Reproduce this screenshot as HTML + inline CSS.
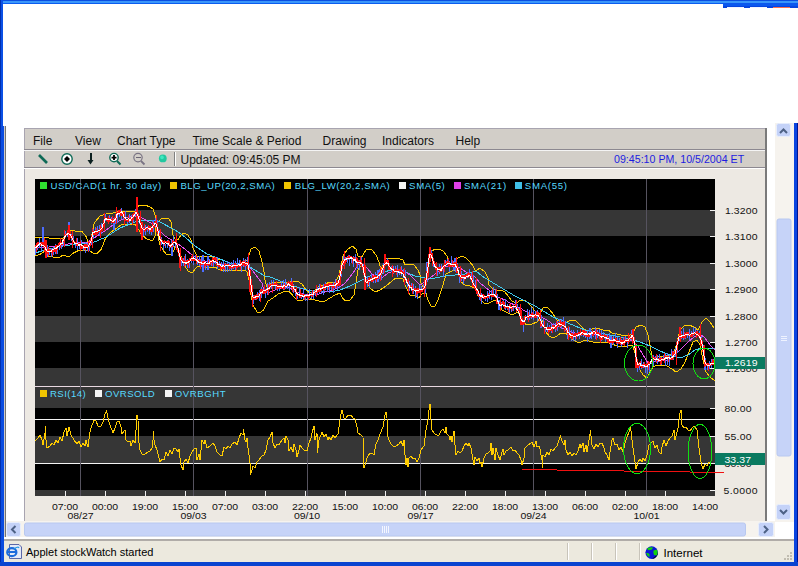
<!DOCTYPE html>
<html><head><meta charset="utf-8"><title>stockWatch</title>
<style>
html,body{margin:0;padding:0;width:798px;height:566px;overflow:hidden;background:#fff}
svg{display:block}
text{font-family:"Liberation Sans",sans-serif}
</style></head><body>
<svg width="798" height="566" viewBox="0 0 798 566" shape-rendering="crispEdges">
<defs>
<clipPath id="cc"><rect x="35" y="179" width="680" height="317"/></clipPath>
</defs>

<rect x="0" y="0" width="798" height="4" fill="#0A5CF0"/>
<rect x="0" y="0" width="798" height="1" fill="#0A4EE0"/>
<rect x="0" y="1" width="798" height="2" fill="#3A96FA"/>
<rect x="723" y="3" width="75" height="5" fill="#0A58EE"/>
<rect x="723" y="6" width="75" height="2" fill="#0646E0"/>
<rect x="727" y="7" width="17" height="1" fill="#F0F4FF"/><rect x="750" y="7" width="17" height="1" fill="#F0F4FF"/><rect x="773" y="7" width="17" height="1" fill="#F87050"/>
<rect x="0" y="0" width="3" height="566" fill="#0A50E6"/>
<rect x="0" y="126" width="4" height="440" fill="#0A4CE0"/>
<rect x="0" y="0" width="1" height="566" fill="#0030B0"/>
<rect x="4" y="126" width="1" height="414" fill="#D0CCC8"/><rect x="5" y="126" width="1" height="414" fill="#727272"/>
<rect x="794" y="123" width="4" height="443" fill="#0A44E0"/><rect x="797" y="123" width="1" height="443" fill="#001490"/>
<rect x="0" y="562" width="798" height="4" fill="#0A44D0"/>
<rect x="775" y="123" width="19" height="399" fill="#F6F3EE"/>
<rect x="776.5" y="123.5" width="14" height="13" rx="2" fill="#C4D2F8" stroke="#E8EEFC" stroke-width="1" shape-rendering="geometricPrecision"/>
<path d="M780 133L783.5 129.5L787 133" fill="none" stroke="#4D6185" stroke-width="2" shape-rendering="geometricPrecision"/>
<rect x="777" y="219" width="14" height="237" rx="2" fill="#C6D3F8" stroke="#B8C8F0" stroke-width="1" shape-rendering="geometricPrecision"/>
<path d="M781 336.5H787M781 338.5H787M781 340.5H787" stroke="#EEF2FF" stroke-width="1"/>
<rect x="776.5" y="504.5" width="14" height="15" rx="2" fill="#C4D2F8" stroke="#E8EEFC" stroke-width="1" shape-rendering="geometricPrecision"/>
<path d="M780 510L783.5 513.5L787 510" fill="none" stroke="#4D6185" stroke-width="2" shape-rendering="geometricPrecision"/>
<rect x="24" y="128" width="743" height="393" fill="#EDE9E3"/>
<rect x="24" y="128" width="741" height="21" fill="#D2CEC8"/>
<rect x="24" y="150" width="741" height="17" fill="#D2CEC8"/>
<rect x="24" y="128" width="741" height="1" fill="#A8A4B0"/>
<rect x="24" y="128" width="1" height="393" fill="#A8A4B0"/>
<rect x="24" y="149" width="741" height="1" fill="#8C8890"/>
<rect x="24" y="150" width="741" height="1" fill="#F4F4F4"/>
<rect x="24" y="167" width="741" height="1" fill="#8C8890"/>
<rect x="24" y="168" width="741" height="1" fill="#FFFFFF"/>
<rect x="765" y="128" width="2" height="393" fill="#7A7A7A"/>
<text x="33" y="144.5" font-size="12" fill="#111">File</text>
<text x="75" y="144.5" font-size="12" fill="#111">View</text>
<text x="117" y="144.5" font-size="12" fill="#111">Chart Type</text>
<text x="192.5" y="144.5" font-size="12" fill="#111">Time Scale &amp; Period</text>
<text x="322.5" y="144.5" font-size="12" fill="#111">Drawing</text>
<text x="382" y="144.5" font-size="12" fill="#111">Indicators</text>
<text x="455.5" y="144.5" font-size="12" fill="#111">Help</text>
<path d="M39 155L47 163" stroke="#0E6A56" stroke-width="2.6" shape-rendering="geometricPrecision"/>
<circle cx="67" cy="159" r="5.2" fill="#fff" stroke="#0E6A56" stroke-width="1.4" shape-rendering="geometricPrecision"/><path d="M67 156L70 159L67 162L64 159Z" fill="#000" shape-rendering="geometricPrecision"/>
<path d="M90.5 153V161" stroke="#0C2020" stroke-width="2"/><path d="M87.5 160L90.5 164.5L93.5 160Z" fill="#0C2020" shape-rendering="geometricPrecision"/>
<circle cx="114" cy="157.6" r="4.2" fill="#fff" stroke="#0E6A56" stroke-width="1.4" shape-rendering="geometricPrecision"/><path d="M111.5 157.6H116.5M114 155.1V160.1" stroke="#000" stroke-width="1.8" shape-rendering="geometricPrecision"/><path d="M117 161L120.5 164.5" stroke="#0E6A56" stroke-width="2" shape-rendering="geometricPrecision"/>
<circle cx="138" cy="157.6" r="4.2" fill="none" stroke="#7A7484" stroke-width="1.2" shape-rendering="geometricPrecision"/><path d="M135.5 157.6H140.5" stroke="#6A6474" stroke-width="1.4"/><path d="M141 161L144.5 164.5" stroke="#7A7484" stroke-width="1.8" shape-rendering="geometricPrecision"/>
<circle cx="162.8" cy="158.4" r="3.9" fill="#22C8A0" shape-rendering="geometricPrecision"/><circle cx="162" cy="157.4" r="1.8" fill="#40E8C0" shape-rendering="geometricPrecision"/>
<rect x="174" y="152" width="1" height="14" fill="#808080"/><rect x="175" y="152" width="1" height="14" fill="#FFFFFF"/>
<text x="180.5" y="163.8" font-size="12" fill="#111">Updated: 09:45:05 PM</text>
<text x="614" y="163.2" font-size="10.65" fill="#1C1CE0">09:45:10 PM, 10/5/2004 ET</text>
<rect x="35" y="179" width="680" height="317" fill="#000"/>
<rect x="35" y="210" width="680" height="26" fill="#363636"/>
<rect x="35" y="263" width="680" height="26" fill="#363636"/>
<rect x="35" y="316" width="680" height="26" fill="#363636"/>
<rect x="35" y="368" width="680" height="18" fill="#363636"/>
<rect x="35" y="387" width="680" height="21" fill="#363636"/>
<rect x="35" y="436" width="680" height="27" fill="#363636"/>
<rect x="35" y="490" width="680" height="6" fill="#363636"/>
<rect x="35" y="386" width="680" height="1" fill="#E8D8E0"/>
<rect x="35" y="419" width="680" height="1" fill="#F4F4F4"/>
<rect x="35" y="463" width="680" height="1" fill="#F4F4F4"/>
<rect x="80" y="179" width="1" height="317" fill="#56535F"/>
<rect x="193" y="179" width="1" height="317" fill="#56535F"/>
<rect x="307" y="179" width="1" height="317" fill="#56535F"/>
<rect x="420" y="179" width="1" height="317" fill="#56535F"/>
<rect x="533" y="179" width="1" height="317" fill="#56535F"/>
<rect x="646" y="179" width="1" height="317" fill="#56535F"/>
<rect x="710" y="210" width="5" height="1" fill="#F0F0F0"/>
<rect x="710" y="236" width="5" height="1" fill="#F0F0F0"/>
<rect x="710" y="263" width="5" height="1" fill="#F0F0F0"/>
<rect x="710" y="289" width="5" height="1" fill="#F0F0F0"/>
<rect x="710" y="316" width="5" height="1" fill="#F0F0F0"/>
<rect x="710" y="342" width="5" height="1" fill="#F0F0F0"/>
<rect x="710" y="368" width="5" height="1" fill="#F0F0F0"/>
<rect x="710" y="408" width="5" height="1" fill="#F0F0F0"/>
<rect x="710" y="436" width="5" height="1" fill="#F0F0F0"/>
<rect x="710" y="463" width="5" height="1" fill="#F0F0F0"/>
<rect x="710" y="490" width="5" height="1" fill="#F0F0F0"/>
<rect x="65" y="491" width="1" height="5" fill="#F0F0F0"/>
<rect x="105" y="491" width="1" height="5" fill="#F0F0F0"/>
<rect x="145" y="491" width="1" height="5" fill="#F0F0F0"/>
<rect x="185" y="491" width="1" height="5" fill="#F0F0F0"/>
<rect x="225" y="491" width="1" height="5" fill="#F0F0F0"/>
<rect x="265" y="491" width="1" height="5" fill="#F0F0F0"/>
<rect x="305" y="491" width="1" height="5" fill="#F0F0F0"/>
<rect x="345" y="491" width="1" height="5" fill="#F0F0F0"/>
<rect x="385" y="491" width="1" height="5" fill="#F0F0F0"/>
<rect x="425" y="491" width="1" height="5" fill="#F0F0F0"/>
<rect x="465" y="491" width="1" height="5" fill="#F0F0F0"/>
<rect x="505" y="491" width="1" height="5" fill="#F0F0F0"/>
<rect x="545" y="491" width="1" height="5" fill="#F0F0F0"/>
<rect x="585" y="491" width="1" height="5" fill="#F0F0F0"/>
<rect x="625" y="491" width="1" height="5" fill="#F0F0F0"/>
<rect x="665" y="491" width="1" height="5" fill="#F0F0F0"/>
<g clip-path="url(#cc)" shape-rendering="crispEdges" fill="none" stroke-linejoin="round">
<polyline points="35.0,238.0 41.0,237.0 46.0,237.0 49.0,238.0 62.0,239.0 64.7,236.0 69.0,230.0 74.5,231.0 81.6,231.0 85.8,236.0 88.7,244.0 90.8,240.0 94.3,223.0 100.0,216.0 105.6,214.0 112.7,213.0 119.7,211.0 126.8,212.0 130.0,211.0 135.0,212.0 137.0,207.0 140.0,205.0 145.0,205.0 150.0,207.0 153.0,209.0 155.0,215.0 156.0,222.0 158.0,222.0 161.0,219.0 165.0,218.0 169.0,219.0 171.0,222.0 172.0,228.0 173.0,235.0 175.0,239.0 178.0,240.0 181.0,235.0 184.0,233.0 188.0,235.0 191.0,240.0 193.0,248.0 195.0,252.0 197.0,256.0 202.0,256.0 210.0,256.0 215.0,258.0 222.0,260.0 228.0,262.0 232.0,264.0 240.0,265.0 247.0,260.0 251.0,249.0 255.0,247.0 259.0,251.0 262.0,262.0 264.0,272.0 265.0,280.0 267.0,287.0 270.0,285.0 272.0,282.0 283.0,282.0 290.0,282.0 297.0,281.0 302.0,284.0 306.0,290.0 310.0,293.0 314.0,291.0 318.0,287.0 325.0,284.0 330.0,282.0 335.0,283.0 339.0,275.0 343.0,256.0 347.0,250.0 352.0,246.0 356.0,249.0 358.0,256.0 362.0,257.0 364.0,253.0 367.0,249.0 372.0,250.0 376.0,255.0 379.0,262.0 381.0,270.0 386.0,258.0 392.0,258.0 400.0,259.0 403.0,260.0 405.0,265.0 410.0,264.0 414.0,265.0 418.0,270.0 420.0,275.0 421.0,283.0 423.0,287.0 426.0,285.0 428.0,270.0 431.0,252.0 435.0,249.0 439.0,249.0 443.0,251.0 447.0,256.0 449.0,263.0 453.0,263.0 458.0,258.0 462.0,256.0 466.0,258.0 470.0,262.0 473.0,266.0 475.0,270.0 477.0,270.0 480.0,268.0 485.0,272.0 488.0,278.0 489.0,285.0 492.0,288.0 497.0,291.0 501.0,290.0 505.0,292.0 508.0,296.0 512.0,301.0 516.0,303.0 521.0,300.0 525.0,300.0 529.0,304.0 533.0,308.0 536.0,313.0 540.0,314.0 543.0,308.0 547.0,307.0 550.0,310.0 553.0,314.0 557.0,320.0 562.0,322.0 567.0,322.0 571.0,320.0 576.0,321.0 580.0,325.0 584.0,329.0 588.0,331.0 592.0,329.0 597.0,328.0 603.0,330.0 608.0,330.0 612.0,333.0 617.0,334.0 621.0,335.0 625.0,336.0 630.0,335.0 633.0,333.0 636.0,327.0 641.0,325.0 645.0,327.0 648.0,335.0 650.0,345.0 652.0,357.0 655.0,359.0 660.0,356.0 665.0,356.0 670.0,355.0 674.0,352.0 677.0,343.0 680.0,330.0 684.0,326.0 689.0,325.0 694.0,327.0 698.0,330.0 702.0,322.0 706.0,318.0 710.0,322.0 714.0,328.0" stroke="#FFCC00" stroke-width="1"/>
<polyline points="35.0,256.0 40.6,254.0 45.0,251.0 47.7,256.0 53.0,257.0 60.0,257.0 63.0,255.0 69.0,257.0 71.7,254.0 77.4,251.0 83.0,250.0 88.7,250.0 93.0,253.0 96.4,254.0 101.4,249.0 105.6,238.0 111.0,232.0 117.0,228.0 121.0,225.0 127.0,224.0 130.0,224.0 135.0,224.0 137.0,227.0 140.0,232.0 143.0,236.0 147.0,239.0 150.0,240.0 153.0,240.0 155.0,236.0 156.0,226.0 158.0,236.0 160.0,245.0 163.0,250.0 166.0,254.0 169.0,255.0 172.0,254.0 174.0,250.0 176.0,243.0 178.0,248.0 181.0,256.0 185.0,266.0 188.0,271.0 192.0,273.0 196.0,268.0 198.0,266.0 205.0,267.0 215.0,267.0 218.0,269.0 225.0,271.0 232.0,270.0 245.0,270.0 247.0,272.0 249.0,280.0 250.0,290.0 253.0,305.0 257.0,312.0 260.0,313.0 263.5,310.0 268.0,301.0 273.0,298.0 278.0,294.0 286.0,291.0 289.5,292.0 297.0,300.0 303.0,300.0 310.5,299.0 319.0,301.0 325.0,301.0 330.0,298.0 335.0,295.0 340.0,293.0 342.0,297.0 345.0,301.0 350.0,300.0 354.0,295.0 356.0,283.0 358.0,270.0 360.0,266.0 362.0,266.0 366.0,280.0 370.0,288.0 375.0,292.0 380.0,290.0 386.0,286.0 392.0,281.0 396.0,278.0 400.0,278.0 403.0,279.0 405.0,285.0 410.0,295.0 415.0,296.0 419.0,298.0 422.0,294.0 426.0,293.0 428.0,300.0 431.0,306.0 435.0,306.0 438.0,300.0 443.0,285.0 446.0,274.0 450.0,272.0 454.0,270.0 458.0,273.0 461.0,282.0 465.0,285.0 470.0,286.0 475.0,288.0 477.0,294.0 481.0,300.0 485.0,304.0 489.0,303.0 493.0,301.0 496.0,300.0 498.0,304.0 502.0,310.0 506.0,312.0 510.0,314.0 514.0,314.0 518.0,312.0 521.0,316.0 523.0,322.0 527.0,325.0 532.0,324.0 537.0,322.0 540.0,318.0 543.0,322.0 546.0,332.0 549.0,336.0 553.0,338.0 557.0,336.0 561.0,333.0 565.0,333.0 569.0,336.0 573.0,340.0 577.0,342.0 581.0,342.0 585.0,340.0 589.0,341.0 593.0,342.0 598.0,342.0 603.0,342.0 607.0,342.0 612.0,344.0 617.0,346.0 621.0,346.0 625.0,347.0 630.0,345.0 633.0,346.0 637.0,360.0 640.0,370.0 643.0,375.0 647.0,378.0 650.0,372.0 653.0,367.0 657.0,365.0 662.0,365.0 667.0,366.0 672.0,369.0 676.0,372.0 681.0,369.0 685.0,362.0 689.0,352.0 693.0,342.0 697.0,340.0 700.0,345.0 703.0,360.0 706.0,372.0 710.0,377.0 715.0,381.0" stroke="#FFCC00" stroke-width="1"/>
<polyline points="35.0,253.0 49.0,249.0 63.0,246.0 77.0,244.0 92.0,243.0 106.0,237.0 120.0,228.0 135.0,222.0 144.0,220.5 157.0,220.5 165.0,224.7 178.0,231.8 185.0,237.0 195.0,246.0 207.0,254.0 220.0,259.0 230.0,263.0 240.0,264.0 250.0,267.0 258.0,272.0 265.0,276.0 270.0,277.0 283.0,282.0 297.0,287.0 307.0,290.0 320.0,291.0 330.0,292.0 340.0,290.0 350.0,286.0 360.0,281.0 370.0,276.0 380.0,274.0 390.0,270.0 400.0,270.0 405.0,272.0 415.0,276.0 425.0,278.0 435.0,278.0 445.0,276.0 455.0,275.0 465.0,274.0 475.0,271.0 477.0,272.0 485.0,278.0 495.0,284.0 505.0,290.0 515.0,296.0 525.0,301.0 535.0,306.0 545.0,312.0 553.0,317.0 563.0,321.0 575.0,326.0 585.0,330.0 595.0,332.0 605.0,334.0 615.0,336.0 625.0,338.0 633.0,340.0 640.0,342.0 650.0,346.0 660.0,351.0 670.0,355.0 680.0,358.0 688.0,355.0 695.0,350.0 702.0,348.0 710.0,348.0 715.0,349.0" stroke="#40CCF0" stroke-width="1"/>
<polyline points="35.0,247.0 49.0,247.0 63.0,245.0 77.0,242.0 88.0,242.0 94.0,238.0 106.0,230.0 117.0,222.0 125.0,218.0 135.0,216.0 138.5,216.0 152.6,224.0 165.0,236.0 176.7,243.0 185.0,249.0 193.0,256.0 200.0,260.0 210.0,262.0 220.0,264.0 230.0,265.0 240.0,265.0 247.0,265.0 252.0,270.0 262.0,283.0 263.5,289.0 268.5,292.5 278.0,289.0 288.0,287.0 297.0,292.0 307.0,295.0 319.0,294.0 325.0,292.0 330.0,291.0 340.0,287.0 345.0,283.0 350.0,277.0 355.0,270.0 358.0,265.0 362.0,263.0 367.0,268.0 372.0,274.0 378.0,278.0 383.0,277.0 388.0,273.0 394.0,271.0 400.0,271.0 403.0,270.0 410.0,275.0 415.0,280.0 420.0,285.0 425.0,282.0 430.0,278.0 435.0,274.0 440.0,270.0 445.0,266.0 455.0,266.0 460.0,268.0 466.0,272.0 475.0,277.0 480.0,283.0 485.0,287.0 490.0,291.0 495.0,295.0 500.0,298.0 505.0,300.0 510.0,303.0 515.0,305.0 520.0,308.0 525.0,311.0 530.0,314.0 535.0,315.0 540.0,316.0 545.0,319.0 550.0,322.0 552.0,324.0 560.0,327.0 567.0,330.0 575.0,333.0 585.0,334.0 595.0,335.0 605.0,337.0 615.0,340.0 625.0,341.0 632.0,340.0 638.0,346.0 643.0,355.0 648.0,363.0 653.0,362.0 660.0,361.0 668.0,360.0 674.0,356.0 680.0,350.0 687.0,343.0 694.0,337.0 700.0,334.0 705.0,338.0 710.0,345.0 715.0,350.0" stroke="#E850F0" stroke-width="1"/>
<path d="M35.5 245.9V255.3 M37.5 244.2V249.7 M39.5 238.2V248.4 M41.5 243.3V251.3 M43.5 243.0V247.3 M45.5 247.0V252.3 M47.5 245.0V256.5 M49.5 250.0V254.9 M51.5 248.1V256.5 M53.5 246.8V254.9 M55.5 243.5V254.1 M57.5 246.4V253.7 M59.5 244.0V249.7 M61.5 241.9V249.1 M63.5 241.2V246.2 M65.5 230.6V237.4 M67.5 230.6V236.8 M69.5 229.5V233.6 M71.5 234.0V241.3 M73.5 235.5V242.3 M75.5 241.7V247.5 M77.5 238.3V249.8 M79.5 243.7V249.4 M81.5 240.4V247.6 M83.5 245.5V250.5 M85.5 242.4V252.9 M87.5 242.9V250.7 M89.5 245.4V251.2 M91.5 238.1V244.9 M93.5 228.6V239.2 M95.5 226.9V234.6 M97.5 225.6V233.9 M99.5 224.8V235.5 M101.5 223.2V234.0 M103.5 219.8V226.8 M105.5 214.0V221.4 M107.5 218.0V222.0 M109.5 214.9V221.1 M111.5 217.2V223.6 M113.5 218.6V226.0 M115.5 214.3V223.6 M117.5 211.7V223.1 M119.5 212.4V216.9 M121.5 208.1V219.3 M123.5 214.4V219.5 M125.5 210.6V219.6 M127.5 219.5V223.6 M129.5 213.5V222.7 M131.5 214.5V219.3 M133.5 215.7V221.6 M135.5 209.2V216.0 M137.5 208.1V219.4 M139.5 218.2V223.5 M141.5 223.3V232.1 M143.5 227.0V236.4 M145.5 224.9V235.2 M147.5 226.4V231.9 M149.5 225.7V233.9 M151.5 227.5V235.1 M153.5 220.0V228.5 M155.5 217.9V223.8 M157.5 220.4V228.3 M159.5 230.0V237.7 M161.5 237.4V245.3 M163.5 242.0V250.3 M165.5 244.0V248.1 M167.5 240.0V247.7 M169.5 241.4V250.7 M171.5 242.0V249.0 M173.5 235.6V247.3 M175.5 238.8V247.9 M177.5 243.5V247.8 M179.5 250.9V260.3 M181.5 258.9V265.5 M183.5 257.9V266.0 M185.5 254.3V265.5 M187.5 258.5V268.3 M189.5 260.8V267.5 M191.5 256.0V262.9 M193.5 256.3V264.5 M195.5 254.8V260.5 M197.5 257.3V264.7 M199.5 255.7V266.3 M201.5 256.7V267.3 M203.5 257.6V265.6 M205.5 261.8V269.9 M207.5 260.1V269.4 M209.5 258.6V265.2 M211.5 259.7V266.1 M213.5 258.4V267.4 M215.5 259.2V263.5 M217.5 257.4V268.5 M219.5 261.1V265.5 M221.5 261.6V265.7 M223.5 261.0V272.3 M225.5 263.1V272.4 M227.5 261.0V272.3 M229.5 262.3V271.2 M231.5 261.8V271.4 M233.5 259.6V269.0 M235.5 261.1V270.4 M237.5 258.2V268.3 M239.5 259.7V265.1 M241.5 261.7V271.9 M243.5 257.6V266.8 M245.5 259.4V270.0 M247.5 257.3V265.8 M249.5 264.3V270.7 M251.5 281.3V287.9 M253.5 294.5V303.7 M255.5 295.7V300.1 M257.5 292.1V296.4 M259.5 290.2V300.7 M261.5 287.0V298.4 M263.5 288.8V292.9 M265.5 288.8V297.5 M267.5 283.2V295.0 M269.5 281.7V289.0 M271.5 280.2V289.4 M273.5 280.0V285.2 M275.5 284.4V288.5 M277.5 286.3V291.3 M279.5 286.5V291.2 M281.5 281.4V286.4 M283.5 280.0V289.7 M285.5 279.2V289.1 M287.5 284.6V289.0 M289.5 281.7V291.4 M291.5 277.6V287.4 M293.5 283.7V292.8 M295.5 288.5V296.2 M297.5 293.0V299.1 M299.5 287.4V297.1 M301.5 294.4V298.6 M303.5 288.2V298.7 M305.5 294.1V300.6 M307.5 295.5V300.8 M309.5 289.0V296.9 M311.5 291.8V298.7 M313.5 291.3V298.8 M315.5 291.2V296.4 M317.5 287.4V294.3 M319.5 284.3V293.4 M321.5 286.8V293.9 M323.5 283.7V295.3 M325.5 281.5V290.0 M327.5 287.2V291.7 M329.5 283.4V293.0 M331.5 283.1V289.8 M333.5 281.5V293.3 M335.5 279.4V288.3 M337.5 282.6V290.0 M339.5 280.6V287.6 M341.5 268.0V276.8 M343.5 255.5V265.9 M345.5 257.1V261.1 M347.5 255.8V263.2 M349.5 255.4V265.9 M351.5 258.2V262.6 M353.5 256.2V266.7 M355.5 254.4V262.9 M357.5 257.8V268.6 M359.5 260.0V269.5 M361.5 256.9V263.6 M363.5 264.1V272.5 M365.5 278.7V284.3 M367.5 275.7V287.1 M369.5 277.6V286.5 M371.5 273.9V281.6 M373.5 277.0V283.0 M375.5 272.3V282.7 M377.5 276.7V281.4 M379.5 269.1V279.2 M381.5 271.3V279.9 M383.5 263.3V274.3 M385.5 258.6V266.4 M387.5 258.1V263.6 M389.5 264.0V269.4 M391.5 265.5V272.4 M393.5 266.3V273.5 M395.5 265.7V270.9 M397.5 264.7V276.6 M399.5 270.2V275.0 M401.5 265.5V275.8 M403.5 268.9V277.7 M405.5 270.4V278.5 M407.5 282.8V287.1 M409.5 280.5V291.4 M411.5 282.8V291.3 M413.5 283.9V294.2 M415.5 286.1V297.6 M417.5 288.3V298.8 M419.5 285.0V291.0 M421.5 285.5V291.1 M423.5 284.0V288.6 M425.5 285.0V293.5 M427.5 273.9V281.5 M429.5 249.7V261.0 M431.5 250.0V258.8 M433.5 261.8V266.7 M435.5 263.7V269.7 M437.5 267.2V276.3 M439.5 264.2V273.5 M441.5 264.2V271.8 M443.5 265.1V276.8 M445.5 260.0V265.8 M447.5 259.1V265.1 M449.5 260.5V271.7 M451.5 256.3V267.0 M453.5 261.1V271.4 M455.5 262.3V271.5 M457.5 262.6V267.1 M459.5 272.6V282.7 M461.5 271.1V280.5 M463.5 275.2V283.9 M465.5 274.5V279.4 M467.5 271.7V277.8 M469.5 269.1V276.9 M471.5 273.2V279.1 M473.5 274.7V284.1 M475.5 280.3V290.0 M477.5 290.4V294.7 M479.5 293.7V299.5 M481.5 292.9V303.8 M483.5 293.8V298.9 M485.5 296.2V301.0 M487.5 291.4V302.1 M489.5 291.2V298.8 M491.5 289.6V300.2 M493.5 287.3V296.4 M495.5 289.1V294.9 M497.5 294.0V303.7 M499.5 303.6V308.8 M501.5 301.7V307.9 M503.5 300.0V305.2 M505.5 299.1V309.9 M507.5 304.3V309.6 M509.5 306.1V312.7 M511.5 307.4V312.3 M513.5 306.6V311.1 M515.5 299.6V308.9 M517.5 303.5V311.3 M519.5 307.8V313.9 M521.5 317.5V324.4 M523.5 319.6V331.5 M525.5 315.3V320.1 M527.5 308.5V319.7 M529.5 310.1V319.9 M531.5 307.2V319.0 M533.5 309.8V320.3 M535.5 310.5V315.6 M537.5 310.2V320.8 M539.5 314.2V319.7 M541.5 314.7V326.0 M543.5 318.9V327.4 M545.5 326.7V332.1 M547.5 322.6V332.3 M549.5 324.7V329.3 M551.5 324.0V332.9 M553.5 322.6V328.8 M555.5 323.3V332.2 M557.5 320.8V331.2 M559.5 319.1V324.7 M561.5 318.8V328.6 M563.5 317.2V327.0 M565.5 320.8V331.3 M567.5 327.8V338.6 M569.5 326.8V334.7 M571.5 329.7V341.0 M573.5 329.6V340.6 M575.5 335.7V341.2 M577.5 330.0V336.9 M579.5 331.6V338.6 M581.5 331.6V335.6 M583.5 329.6V337.1 M585.5 332.6V337.5 M587.5 330.9V341.5 M589.5 332.0V338.6 M591.5 331.5V338.5 M593.5 332.5V337.0 M595.5 326.8V338.5 M597.5 330.1V338.2 M599.5 328.5V336.8 M601.5 329.5V341.2 M603.5 331.9V337.3 M605.5 335.9V341.9 M607.5 333.8V338.0 M609.5 333.0V342.6 M611.5 339.5V343.7 M613.5 336.3V344.9 M615.5 332.8V342.4 M617.5 336.8V347.8 M619.5 337.6V341.9 M621.5 338.7V346.6 M623.5 337.2V343.5 M625.5 336.0V343.2 M627.5 338.8V347.5 M629.5 336.8V342.0 M631.5 330.0V340.0 M633.5 332.3V342.9 M635.5 343.5V350.6 M637.5 360.8V371.5 M639.5 363.1V370.2 M641.5 358.6V368.8 M643.5 361.5V367.5 M645.5 365.6V373.1 M647.5 363.5V373.9 M649.5 361.6V372.1 M651.5 359.9V364.3 M653.5 354.8V366.4 M655.5 355.5V361.5 M657.5 354.7V363.7 M659.5 353.8V362.0 M661.5 357.3V364.8 M663.5 355.3V359.4 M665.5 353.8V365.5 M667.5 353.1V364.5 M669.5 355.1V365.5 M671.5 349.2V360.2 M673.5 351.0V360.2 M675.5 347.6V357.0 M677.5 344.4V352.7 M679.5 332.0V341.0 M681.5 331.2V339.4 M683.5 327.9V339.5 M685.5 332.7V339.1 M687.5 333.1V338.0 M689.5 328.8V340.4 M691.5 330.7V336.9 M693.5 327.3V335.5 M695.5 328.3V333.3 M697.5 329.9V336.3 M699.5 330.6V336.9 M701.5 335.9V340.6 M703.5 345.3V356.0 M705.5 359.6V368.2 M707.5 364.5V370.1 M709.5 361.4V369.1 M711.5 359.4V368.3 M713.5 358.7V365.2 M715.5 360.2V366.0" stroke="#5070FF" stroke-width="1.6"/>
<path d="M43.0 227.0V245.0 M69.0 222.0V236.0 M114.0 218.0V230.0 M153.0 220.0V232.0 M203.0 255.0V272.0 M208.0 256.0V270.0 M378.0 270.0V282.0 M427.0 262.0V280.0 M455.0 258.0V270.0 M499.0 300.0V310.0 M541.0 318.0V328.0 M590.0 328.0V338.0 M611.0 336.0V348.0 M705.0 358.0V370.0 M172.0 240.0V256.0" stroke="#4C6CFF" stroke-width="1.2"/>
<path d="M36.5 242.9V251.8 M40.5 241.5V245.7 M44.5 238.2V251.7 M48.5 246.9V255.7 M52.5 248.6V256.3 M56.5 244.8V253.5 M60.5 237.9V248.3 M64.5 229.8V246.8 M68.5 231.0V234.5 M72.5 231.3V247.7 M76.5 238.4V246.4 M80.5 241.1V251.3 M84.5 243.7V248.2 M88.5 241.2V252.1 M92.5 228.0V247.5 M96.5 228.0V236.1 M100.5 224.5V238.4 M104.5 213.0V231.2 M108.5 216.0V223.9 M112.5 215.6V223.4 M116.5 207.4V223.6 M120.5 209.1V216.2 M124.5 212.2V224.5 M128.5 215.4V222.3 M132.5 213.6V225.4 M136.5 209.1V216.6 M140.5 211.2V232.5 M144.5 223.5V232.1 M148.5 225.2V231.2 M152.5 221.5V231.7 M156.5 214.8V232.0 M160.5 229.0V250.5 M164.5 240.2V246.3 M168.5 240.4V246.2 M172.5 239.6V247.1 M176.5 233.0V249.6 M180.5 247.7V271.0 M184.5 255.6V266.7 M188.5 259.9V268.1 M192.5 253.9V260.9 M196.5 254.7V263.9 M200.5 258.5V268.5 M204.5 261.9V268.0 M208.5 260.0V266.2 M212.5 256.6V266.1 M216.5 257.7V265.8 M220.5 262.7V270.8 M224.5 262.7V269.5 M228.5 263.8V267.2 M232.5 263.7V268.7 M236.5 264.0V270.7 M240.5 259.7V270.2 M244.5 260.2V266.8 M248.5 252.9V276.9 M252.5 285.4V307.1 M256.5 293.6V298.9 M260.5 288.9V301.8 M264.5 284.8V294.1 M268.5 283.5V295.0 M272.5 283.2V292.7 M276.5 281.0V289.7 M280.5 284.1V288.3 M284.5 282.6V289.8 M288.5 281.1V286.0 M292.5 280.7V292.2 M296.5 287.0V300.0 M300.5 289.1V298.0 M304.5 294.4V299.9 M308.5 293.9V299.6 M312.5 290.3V296.9 M316.5 285.4V297.3 M320.5 283.5V292.1 M324.5 283.9V291.4 M328.5 284.2V289.8 M332.5 284.2V291.0 M336.5 280.0V288.3 M340.5 265.3V284.9 M344.5 250.8V268.6 M348.5 254.5V260.1 M352.5 256.5V263.7 M356.5 257.3V266.5 M360.5 256.3V264.8 M364.5 257.9V280.7 M368.5 277.9V285.0 M372.5 274.5V281.6 M376.5 276.0V282.2 M380.5 266.6V281.1 M384.5 257.0V272.8 M388.5 259.6V269.5 M392.5 265.3V276.7 M396.5 268.1V275.3 M400.5 266.6V273.7 M404.5 268.0V284.9 M408.5 277.7V293.5 M412.5 282.5V293.9 M416.5 288.7V296.0 M420.5 288.7V295.9 M424.5 277.8V297.3 M428.5 254.1V276.7 M432.5 253.1V265.9 M436.5 262.1V275.5 M440.5 265.8V271.1 M444.5 259.9V271.6 M448.5 257.9V267.1 M452.5 260.1V266.2 M456.5 257.2V272.9 M460.5 266.3V282.3 M464.5 277.5V281.1 M468.5 272.4V277.5 M472.5 271.2V287.1 M476.5 278.2V294.1 M480.5 287.9V300.9 M484.5 295.3V299.0 M488.5 292.8V297.3 M492.5 288.8V297.3 M496.5 288.7V304.0 M500.5 298.4V310.9 M504.5 302.4V308.9 M508.5 305.6V312.0 M512.5 306.0V311.1 M516.5 300.4V312.1 M520.5 304.1V323.7 M524.5 316.2V323.9 M528.5 311.6V322.1 M532.5 312.4V317.5 M536.5 310.8V318.2 M540.5 309.5V326.8 M544.5 320.8V333.6 M548.5 328.5V333.6 M552.5 324.7V332.6 M556.5 320.8V329.7 M560.5 319.5V325.2 M564.5 321.1V331.7 M568.5 326.4V339.5 M572.5 333.1V339.4 M576.5 332.6V339.4 M580.5 328.9V335.6 M584.5 329.9V334.9 M588.5 332.9V336.8 M592.5 329.7V335.5 M596.5 329.2V339.7 M600.5 332.5V342.9 M604.5 333.6V338.6 M608.5 336.1V343.3 M612.5 336.8V343.5 M616.5 337.9V344.4 M620.5 337.3V345.4 M624.5 337.2V346.1 M628.5 333.3V344.2 M632.5 331.6V343.7 M636.5 344.5V367.2 M640.5 360.6V364.3 M644.5 362.1V367.5 M648.5 360.5V369.5 M652.5 354.8V363.7 M656.5 353.9V362.6 M660.5 357.2V364.9 M664.5 353.0V362.6 M668.5 355.9V361.6 M672.5 350.7V359.8 M676.5 341.5V364.7 M680.5 326.5V341.9 M684.5 331.5V339.4 M688.5 331.6V335.8 M692.5 332.4V337.4 M696.5 332.0V337.9 M700.5 323.6V346.4 M704.5 344.8V367.3 M708.5 362.9V370.7 M712.5 358.9V365.3" stroke="#FF1010" stroke-width="1.2"/>
<polyline points="35.0,247.2 36.0,245.5 37.0,246.7 38.0,243.1 39.0,244.2 40.0,243.6 41.0,242.5 42.0,244.7 43.0,242.9 44.0,245.7 45.0,246.1 46.0,248.2 47.0,250.3 48.0,252.8 49.0,250.3 50.0,250.3 51.0,251.6 52.0,252.5 53.0,250.3 54.0,248.9 55.0,250.8 56.0,246.0 57.0,249.0 58.0,245.7 59.0,244.2 60.0,243.1 61.0,243.1 62.0,244.4 63.0,239.4 64.0,238.9 65.0,237.3 66.0,234.9 67.0,234.5 68.0,231.2 69.0,230.1 70.0,232.9 71.0,237.2 72.0,238.2 73.0,239.5 74.0,242.5 75.0,243.0 76.0,242.6 77.0,245.2 78.0,245.2 79.0,243.6 80.0,245.6 81.0,245.8 82.0,247.7 83.0,247.3 84.0,245.6 85.0,248.9 86.0,245.2 87.0,246.1 88.0,247.1 89.0,243.9 90.0,245.0 91.0,238.6 92.0,237.1 93.0,233.2 94.0,232.3 95.0,233.7 96.0,231.2 97.0,232.9 98.0,231.9 99.0,231.4 100.0,230.3 101.0,231.5 102.0,229.3 103.0,224.7 104.0,222.9 105.0,217.6 106.0,219.1 107.0,219.3 108.0,221.3 109.0,221.0 110.0,219.1 111.0,220.0 112.0,221.7 113.0,219.4 114.0,221.8 115.0,218.3 116.0,215.8 117.0,213.3 118.0,214.2 119.0,211.0 120.0,211.2 121.0,211.5 122.0,215.1 123.0,213.2 124.0,216.3 125.0,218.2 126.0,220.1 127.0,220.2 128.0,220.8 129.0,218.6 130.0,219.6 131.0,218.4 132.0,219.7 133.0,219.0 134.0,214.5 135.0,213.2 136.0,212.2 137.0,210.8 138.0,214.9 139.0,218.9 140.0,221.0 141.0,223.8 142.0,229.6 143.0,228.8 144.0,229.0 145.0,230.0 146.0,228.8 147.0,228.1 148.0,228.5 149.0,229.1 150.0,226.7 151.0,230.8 152.0,228.6 153.0,227.3 154.0,225.3 155.0,222.5 156.0,221.6 157.0,225.3 158.0,232.6 159.0,234.1 160.0,238.1 161.0,240.1 162.0,241.2 163.0,243.3 164.0,242.0 165.0,241.8 166.0,242.5 167.0,241.7 168.0,242.4 169.0,241.9 170.0,246.6 171.0,246.5 172.0,243.5 173.0,242.9 174.0,242.3 175.0,241.9 176.0,240.3 177.0,246.5 178.0,250.2 179.0,252.9 180.0,257.9 181.0,257.5 182.0,258.9 183.0,261.3 184.0,261.3 185.0,264.1 186.0,261.5 187.0,260.6 188.0,264.3 189.0,262.1 190.0,258.4 191.0,259.8 192.0,257.1 193.0,258.9 194.0,260.5 195.0,259.6 196.0,260.2 197.0,259.6 198.0,261.4 199.0,260.7 200.0,263.6 201.0,262.7 202.0,264.0 203.0,262.3 204.0,261.8 205.0,264.4 206.0,265.1 207.0,264.6 208.0,264.3 209.0,264.4 210.0,264.1 211.0,261.2 212.0,261.9 213.0,260.6 214.0,258.5 215.0,257.9 216.0,260.4 217.0,261.6 218.0,264.8 219.0,266.5 220.0,264.8 221.0,267.4 222.0,268.1 223.0,268.0 224.0,265.4 225.0,264.8 226.0,264.8 227.0,264.7 228.0,264.7 229.0,266.5 230.0,267.8 231.0,267.5 232.0,265.9 233.0,266.7 234.0,267.3 235.0,264.2 236.0,266.5 237.0,267.4 238.0,266.6 239.0,266.3 240.0,264.9 241.0,262.9 242.0,264.9 243.0,262.3 244.0,264.3 245.0,265.1 246.0,262.5 247.0,262.6 248.0,267.5 249.0,269.0 250.0,273.5 251.0,283.4 252.0,293.5 253.0,298.3 254.0,299.3 255.0,295.9 256.0,298.4 257.0,298.6 258.0,296.7 259.0,294.3 260.0,294.2 261.0,291.4 262.0,289.9 263.0,293.6 264.0,291.7 265.0,290.6 266.0,291.9 267.0,289.0 268.0,290.1 269.0,289.2 270.0,285.7 271.0,285.4 272.0,285.1 273.0,284.4 274.0,285.4 275.0,284.3 276.0,285.3 277.0,284.4 278.0,288.1 279.0,286.0 280.0,286.8 281.0,287.2 282.0,288.4 283.0,286.1 284.0,288.0 285.0,286.0 286.0,285.7 287.0,285.3 288.0,282.7 289.0,284.1 290.0,282.6 291.0,282.8 292.0,287.3 293.0,285.6 294.0,287.9 295.0,290.7 296.0,291.7 297.0,292.5 298.0,295.1 299.0,295.4 300.0,296.7 301.0,293.9 302.0,296.1 303.0,294.9 304.0,295.0 305.0,297.2 306.0,296.0 307.0,296.3 308.0,297.1 309.0,297.4 310.0,295.0 311.0,295.3 312.0,294.4 313.0,294.1 314.0,293.8 315.0,291.8 316.0,291.1 317.0,289.9 318.0,291.6 319.0,290.2 320.0,290.7 321.0,290.5 322.0,287.1 323.0,288.1 324.0,289.4 325.0,288.5 326.0,285.2 327.0,284.9 328.0,286.1 329.0,284.3 330.0,284.9 331.0,283.9 332.0,286.3 333.0,286.6 334.0,286.9 335.0,283.5 336.0,285.5 337.0,284.7 338.0,281.9 339.0,284.7 340.0,278.6 341.0,268.8 342.0,268.0 343.0,261.6 344.0,261.2 345.0,262.7 346.0,261.2 347.0,257.5 348.0,258.4 349.0,258.4 350.0,257.3 351.0,257.1 352.0,258.0 353.0,260.2 354.0,257.5 355.0,260.2 356.0,260.4 357.0,259.2 358.0,261.3 359.0,262.8 360.0,262.6 361.0,260.8 362.0,265.1 363.0,267.8 364.0,272.1 365.0,278.3 366.0,280.5 367.0,281.0 368.0,283.2 369.0,280.0 370.0,278.4 371.0,279.2 372.0,280.8 373.0,279.9 374.0,276.9 375.0,276.2 376.0,279.3 377.0,277.6 378.0,277.9 379.0,273.9 380.0,272.6 381.0,274.1 382.0,271.7 383.0,266.8 384.0,267.3 385.0,262.6 386.0,263.7 387.0,260.8 388.0,264.6 389.0,263.6 390.0,269.6 391.0,268.4 392.0,268.5 393.0,270.0 394.0,272.3 395.0,270.0 396.0,269.6 397.0,271.5 398.0,270.4 399.0,270.1 400.0,270.5 401.0,270.8 402.0,272.2 403.0,273.4 404.0,274.1 405.0,278.5 406.0,278.7 407.0,282.0 408.0,282.6 409.0,285.3 410.0,285.9 411.0,287.4 412.0,286.9 413.0,290.5 414.0,290.2 415.0,288.9 416.0,290.4 417.0,292.7 418.0,289.3 419.0,292.2 420.0,290.2 421.0,290.2 422.0,291.5 423.0,288.5 424.0,288.0 425.0,287.8 426.0,283.1 427.0,274.3 428.0,268.0 429.0,258.9 430.0,252.6 431.0,254.6 432.0,257.3 433.0,259.5 434.0,263.4 435.0,264.4 436.0,268.7 437.0,267.9 438.0,267.8 439.0,267.7 440.0,271.3 441.0,271.6 442.0,269.8 443.0,267.0 444.0,265.9 445.0,264.8 446.0,264.2 447.0,261.5 448.0,263.1 449.0,262.6 450.0,266.0 451.0,266.4 452.0,264.9 453.0,263.9 454.0,266.5 455.0,263.2 456.0,264.9 457.0,264.8 458.0,270.5 459.0,274.9 460.0,276.0 461.0,275.7 462.0,278.0 463.0,275.8 464.0,277.0 465.0,276.2 466.0,277.6 467.0,275.0 468.0,273.9 469.0,274.1 470.0,275.5 471.0,278.7 472.0,280.1 473.0,283.4 474.0,285.4 475.0,288.0 476.0,289.7 477.0,289.5 478.0,291.2 479.0,296.1 480.0,293.5 481.0,297.0 482.0,297.6 483.0,294.7 484.0,297.8 485.0,297.7 486.0,296.6 487.0,297.0 488.0,297.4 489.0,294.4 490.0,295.6 491.0,295.0 492.0,296.0 493.0,295.3 494.0,295.8 495.0,295.0 496.0,296.7 497.0,299.3 498.0,302.9 499.0,302.8 500.0,303.9 501.0,303.7 502.0,304.1 503.0,302.3 504.0,306.2 505.0,305.8 506.0,306.8 507.0,307.6 508.0,307.8 509.0,307.0 510.0,304.8 511.0,308.3 512.0,307.8 513.0,306.5 514.0,306.4 515.0,306.7 516.0,305.4 517.0,309.7 518.0,308.9 519.0,310.8 520.0,314.3 521.0,319.0 522.0,319.2 523.0,324.1 524.0,323.1 525.0,319.0 526.0,316.5 527.0,316.7 528.0,317.3 529.0,317.4 530.0,316.5 531.0,316.6 532.0,314.1 533.0,314.4 534.0,314.9 535.0,317.1 536.0,314.8 537.0,315.6 538.0,312.9 539.0,315.4 540.0,318.6 541.0,322.8 542.0,324.5 543.0,326.1 544.0,326.1 545.0,327.8 546.0,328.3 547.0,329.1 548.0,328.3 549.0,331.2 550.0,327.7 551.0,330.6 552.0,329.9 553.0,325.4 554.0,326.8 555.0,327.9 556.0,328.1 557.0,325.3 558.0,324.0 559.0,323.2 560.0,326.0 561.0,323.0 562.0,324.9 563.0,323.2 564.0,325.1 565.0,329.0 566.0,327.4 567.0,332.4 568.0,332.4 569.0,335.4 570.0,335.9 571.0,334.3 572.0,337.7 573.0,336.4 574.0,334.9 575.0,334.3 576.0,336.0 577.0,335.3 578.0,334.1 579.0,332.9 580.0,333.3 581.0,332.7 582.0,334.5 583.0,331.1 584.0,334.6 585.0,335.2 586.0,332.3 587.0,335.9 588.0,334.9 589.0,335.8 590.0,333.1 591.0,332.9 592.0,332.5 593.0,334.7 594.0,332.4 595.0,332.1 596.0,333.0 597.0,333.0 598.0,332.8 599.0,333.7 600.0,337.7 601.0,336.1 602.0,338.9 603.0,335.9 604.0,336.0 605.0,337.0 606.0,336.3 607.0,337.8 608.0,341.0 609.0,341.4 610.0,341.7 611.0,341.6 612.0,342.6 613.0,342.4 614.0,340.5 615.0,341.0 616.0,338.5 617.0,342.0 618.0,341.3 619.0,343.1 620.0,343.0 621.0,341.7 622.0,341.0 623.0,344.5 624.0,340.6 625.0,341.7 626.0,340.7 627.0,340.1 628.0,341.1 629.0,341.1 630.0,336.9 631.0,337.7 632.0,335.1 633.0,335.3 634.0,339.5 635.0,346.0 636.0,353.5 637.0,364.7 638.0,366.8 639.0,364.0 640.0,363.1 641.0,366.5 642.0,367.2 643.0,365.3 644.0,364.4 645.0,365.1 646.0,365.2 647.0,365.6 648.0,363.7 649.0,363.6 650.0,362.9 651.0,362.3 652.0,361.7 653.0,359.1 654.0,358.1 655.0,358.6 656.0,359.6 657.0,359.5 658.0,359.5 659.0,358.6 660.0,359.8 661.0,363.1 662.0,358.6 663.0,359.5 664.0,359.3 665.0,359.6 666.0,356.8 667.0,357.0 668.0,356.9 669.0,357.6 670.0,357.5 671.0,359.5 672.0,358.8 673.0,358.6 674.0,353.2 675.0,351.6 676.0,352.9 677.0,347.7 678.0,339.9 679.0,338.4 680.0,333.8 681.0,335.2 682.0,337.2 683.0,336.4 684.0,336.6 685.0,337.1 686.0,333.9 687.0,333.3 688.0,333.2 689.0,334.6 690.0,335.1 691.0,335.9 692.0,334.7 693.0,334.1 694.0,334.4 695.0,332.8 696.0,333.6 697.0,331.6 698.0,335.2 699.0,334.2 700.0,338.5 701.0,338.6 702.0,343.1 703.0,348.4 704.0,355.4 705.0,363.6 706.0,365.4 707.0,364.3 708.0,363.6 709.0,365.1 710.0,364.9 711.0,363.5 712.0,362.5 713.0,363.9 714.0,361.1 715.0,362.1" stroke="#FF1010" stroke-width="2"/>
<path d="M137.0 197.0V232.0 M430.0 247.0V262.0 M633.0 329.0V340.0 M680.0 327.0V338.0 M385.0 254.0V266.0 M46.0 240.0V258.0 M69.0 225.0V240.0 M142.0 222.0V240.0 M180.0 250.0V268.0 M365.0 265.0V290.0 M250.0 270.0V292.0 M521.0 310.0V325.0 M636.0 345.0V368.0" stroke="#FF1010" stroke-width="1.8"/>
<polyline points="35.0,247.4 36.0,247.9 37.0,246.3 38.0,245.8 39.0,244.4 40.0,243.7 41.0,243.9 42.0,245.6 43.0,245.6 44.0,245.9 45.0,247.0 46.0,249.6 47.0,251.0 48.0,251.2 49.0,251.1 50.0,251.8 51.0,251.9 52.0,250.0 53.0,249.0 54.0,249.0 55.0,248.5 56.0,248.4 57.0,246.8 58.0,247.2 59.0,246.2 60.0,244.8 61.0,243.3 62.0,243.5 63.0,240.4 64.0,239.3 65.0,236.4 66.0,234.9 67.0,234.8 68.0,232.8 69.0,234.0 70.0,234.2 71.0,235.8 72.0,237.9 73.0,240.2 74.0,242.2 75.0,243.8 76.0,242.8 77.0,243.7 78.0,243.7 79.0,245.7 80.0,244.5 81.0,244.8 82.0,245.2 83.0,246.1 84.0,247.4 85.0,247.5 86.0,247.2 87.0,247.4 88.0,246.8 89.0,245.1 90.0,243.1 91.0,241.5 92.0,236.8 93.0,232.5 94.0,232.3 95.0,231.8 96.0,231.7 97.0,231.5 98.0,230.8 99.0,230.0 100.0,230.1 101.0,229.0 102.0,228.3 103.0,224.0 104.0,223.1 105.0,219.4 106.0,218.5 107.0,219.3 108.0,219.7 109.0,219.4 110.0,219.1 111.0,220.4 112.0,220.7 113.0,222.3 114.0,220.5 115.0,219.5 116.0,218.3 117.0,214.3 118.0,213.5 119.0,213.3 120.0,212.9 121.0,211.7 122.0,212.6 123.0,214.1 124.0,217.3 125.0,217.1 126.0,218.9 127.0,219.6 128.0,218.9 129.0,219.1 130.0,220.4 131.0,219.2 132.0,217.5 133.0,217.4 134.0,215.5 135.0,214.2 136.0,212.3 137.0,214.0 138.0,216.0 139.0,218.8 140.0,223.1 141.0,225.0 142.0,227.9 143.0,229.3 144.0,229.6 145.0,229.1 146.0,227.8 147.0,227.5 148.0,228.0 149.0,228.3 150.0,229.5 151.0,227.7 152.0,227.9 153.0,226.1 154.0,224.9 155.0,223.5 156.0,224.2 157.0,226.7 158.0,231.3 159.0,235.7 160.0,239.7 161.0,240.5 162.0,242.1 163.0,244.1 164.0,243.5 165.0,243.1 166.0,242.9 167.0,243.6 168.0,243.2 169.0,245.0 170.0,245.8 171.0,246.3 172.0,244.5 173.0,243.2 174.0,242.4 175.0,242.5 176.0,243.6 177.0,244.9 178.0,248.1 179.0,252.8 180.0,257.0 181.0,259.7 182.0,261.2 183.0,262.4 184.0,262.7 185.0,261.9 186.0,263.5 187.0,262.3 188.0,262.5 189.0,261.2 190.0,261.0 191.0,259.0 192.0,258.7 193.0,258.3 194.0,257.7 195.0,259.3 196.0,259.5 197.0,260.3 198.0,261.4 199.0,263.2 200.0,262.4 201.0,262.1 202.0,263.4 203.0,263.2 204.0,264.0 205.0,262.2 206.0,262.9 207.0,263.6 208.0,263.7 209.0,263.8 210.0,261.9 211.0,262.0 212.0,261.0 213.0,260.6 214.0,261.5 215.0,260.8 216.0,262.2 217.0,262.4 218.0,264.5 219.0,264.4 220.0,264.5 221.0,266.1 222.0,266.7 223.0,265.2 224.0,266.2 225.0,266.2 226.0,265.4 227.0,265.7 228.0,265.3 229.0,265.4 230.0,265.5 231.0,266.2 232.0,266.3 233.0,265.4 234.0,265.0 235.0,265.6 236.0,266.2 237.0,265.0 238.0,265.0 239.0,264.6 240.0,265.4 241.0,264.4 242.0,262.8 243.0,262.4 244.0,262.8 245.0,263.1 246.0,263.3 247.0,263.0 248.0,264.8 249.0,269.9 250.0,275.8 251.0,284.6 252.0,291.8 253.0,297.4 254.0,297.0 255.0,297.6 256.0,296.7 257.0,296.3 258.0,296.6 259.0,296.0 260.0,293.7 261.0,292.4 262.0,292.6 263.0,290.9 264.0,290.0 265.0,291.3 266.0,289.8 267.0,289.9 268.0,288.3 269.0,288.5 270.0,287.0 271.0,285.8 272.0,285.0 273.0,285.6 274.0,285.6 275.0,286.2 276.0,284.8 277.0,286.2 278.0,286.1 279.0,286.7 280.0,286.1 281.0,286.4 282.0,286.6 283.0,287.3 284.0,285.4 285.0,285.9 286.0,286.2 287.0,286.1 288.0,284.2 289.0,283.7 290.0,285.4 291.0,286.0 292.0,286.0 293.0,286.1 294.0,289.1 295.0,289.5 296.0,292.3 297.0,293.5 298.0,295.1 299.0,294.5 300.0,296.0 301.0,295.0 302.0,295.6 303.0,296.6 304.0,296.7 305.0,295.4 306.0,295.4 307.0,295.8 308.0,295.9 309.0,295.4 310.0,294.4 311.0,294.3 312.0,294.8 313.0,294.6 314.0,292.1 315.0,292.1 316.0,291.5 317.0,289.3 318.0,290.3 319.0,288.6 320.0,289.2 321.0,288.7 322.0,288.5 323.0,287.4 324.0,287.2 325.0,287.2 326.0,286.7 327.0,286.9 328.0,286.3 329.0,286.1 330.0,285.0 331.0,286.0 332.0,285.6 333.0,284.9 334.0,285.7 335.0,285.5 336.0,284.4 337.0,283.4 338.0,283.4 339.0,280.2 340.0,275.8 341.0,270.7 342.0,265.2 343.0,263.0 344.0,261.3 345.0,259.6 346.0,260.0 347.0,258.3 348.0,259.1 349.0,258.9 350.0,258.3 351.0,257.5 352.0,258.8 353.0,259.0 354.0,260.5 355.0,259.4 356.0,261.4 357.0,262.3 358.0,262.3 359.0,262.9 360.0,261.9 361.0,263.7 362.0,264.1 363.0,267.4 364.0,273.0 365.0,276.5 366.0,282.1 367.0,283.0 368.0,281.1 369.0,280.7 370.0,280.7 371.0,278.8 372.0,279.8 373.0,278.0 374.0,278.7 375.0,277.0 376.0,277.5 377.0,278.1 378.0,276.1 379.0,275.3 380.0,274.5 381.0,272.9 382.0,270.4 383.0,268.0 384.0,264.7 385.0,264.1 386.0,262.7 387.0,263.5 388.0,263.1 389.0,266.1 390.0,266.6 391.0,268.7 392.0,269.5 393.0,269.5 394.0,271.1 395.0,271.0 396.0,271.4 397.0,272.2 398.0,270.8 399.0,272.8 400.0,272.4 401.0,272.5 402.0,274.1 403.0,273.8 404.0,276.5 405.0,277.5 406.0,279.4 407.0,282.4 408.0,283.9 409.0,285.4 410.0,288.0 411.0,287.6 412.0,289.6 413.0,289.0 414.0,290.2 415.0,291.2 416.0,290.7 417.0,291.1 418.0,290.5 419.0,289.8 420.0,289.6 421.0,289.5 422.0,290.0 423.0,288.9 424.0,288.0 425.0,286.1 426.0,280.3 427.0,273.6 428.0,266.8 429.0,257.9 430.0,254.0 431.0,254.7 432.0,257.4 433.0,261.2 434.0,263.7 435.0,266.5 436.0,267.8 437.0,268.0 438.0,269.5 439.0,269.4 440.0,269.0 441.0,270.5 442.0,268.5 443.0,267.3 444.0,266.1 445.0,265.9 446.0,265.1 447.0,264.1 448.0,263.1 449.0,263.2 450.0,263.0 451.0,264.6 452.0,264.8 453.0,264.4 454.0,264.8 455.0,264.6 456.0,266.4 457.0,268.3 458.0,270.5 459.0,274.8 460.0,275.1 461.0,277.1 462.0,277.5 463.0,277.5 464.0,277.1 465.0,278.6 466.0,276.7 467.0,277.1 468.0,276.9 469.0,275.2 470.0,276.1 471.0,278.5 472.0,280.2 473.0,282.6 474.0,285.3 475.0,285.9 476.0,288.0 477.0,289.6 478.0,291.1 479.0,294.4 480.0,295.6 481.0,296.4 482.0,295.6 483.0,297.4 484.0,296.8 485.0,296.0 486.0,296.5 487.0,295.9 488.0,295.5 489.0,295.0 490.0,295.0 491.0,294.1 492.0,294.2 493.0,294.8 494.0,294.7 495.0,295.4 496.0,296.5 497.0,298.0 498.0,301.6 499.0,303.9 500.0,305.7 501.0,305.4 502.0,304.2 503.0,304.8 504.0,305.7 505.0,304.9 506.0,307.0 507.0,305.8 508.0,306.5 509.0,306.5 510.0,307.5 511.0,307.8 512.0,307.2 513.0,306.2 514.0,307.0 515.0,306.2 516.0,306.8 517.0,309.5 518.0,310.7 519.0,313.1 520.0,315.7 521.0,318.9 522.0,320.4 523.0,322.2 524.0,321.4 525.0,319.7 526.0,317.5 527.0,317.2 528.0,316.6 529.0,315.9 530.0,315.5 531.0,316.2 532.0,315.2 533.0,316.8 534.0,315.3 535.0,314.9 536.0,314.9 537.0,316.2 538.0,315.6 539.0,316.6 540.0,318.7 541.0,320.9 542.0,324.1 543.0,325.6 544.0,327.1 545.0,328.2 546.0,327.6 547.0,329.4 548.0,329.3 549.0,330.1 550.0,329.6 551.0,329.3 552.0,327.1 553.0,328.2 554.0,327.8 555.0,327.4 556.0,325.2 557.0,324.9 558.0,324.2 559.0,323.6 560.0,324.9 561.0,324.9 562.0,324.8 563.0,325.4 564.0,325.8 565.0,326.6 566.0,328.2 567.0,330.0 568.0,332.8 569.0,333.1 570.0,334.4 571.0,335.3 572.0,335.0 573.0,336.0 574.0,336.2 575.0,336.9 576.0,335.7 577.0,335.1 578.0,335.9 579.0,334.5 580.0,334.7 581.0,333.7 582.0,332.3 583.0,333.1 584.0,333.4 585.0,334.3 586.0,333.6 587.0,334.4 588.0,334.1 589.0,333.4 590.0,334.6 591.0,332.7 592.0,333.6 593.0,331.8 594.0,331.4 595.0,332.1 596.0,333.9 597.0,335.0 598.0,333.8 599.0,335.5 600.0,336.2 601.0,337.3 602.0,336.4 603.0,337.0 604.0,336.7 605.0,337.9 606.0,337.2 607.0,339.2 608.0,338.6 609.0,339.1 610.0,340.7 611.0,340.7 612.0,340.0 613.0,340.8 614.0,339.4 615.0,340.8 616.0,340.9 617.0,341.6 618.0,341.8 619.0,341.7 620.0,342.1 621.0,342.5 622.0,343.5 623.0,341.8 624.0,343.0 625.0,340.9 626.0,340.8 627.0,340.3 628.0,340.8 629.0,339.0 630.0,337.8 631.0,337.8 632.0,335.5 633.0,336.9 634.0,340.9 635.0,348.0 636.0,356.7 637.0,362.3 638.0,364.7 639.0,364.1 640.0,363.6 641.0,365.4 642.0,365.4 643.0,366.0 644.0,365.3 645.0,366.4 646.0,367.1 647.0,366.4 648.0,364.8 649.0,364.7 650.0,364.4 651.0,361.5 652.0,359.4 653.0,358.4 654.0,358.9 655.0,359.7 656.0,358.8 657.0,359.2 658.0,359.7 659.0,360.2 660.0,360.8 661.0,360.0 662.0,359.9 663.0,358.9 664.0,359.7 665.0,358.7 666.0,357.2 667.0,358.9 668.0,357.2 669.0,357.7 670.0,358.7 671.0,358.1 672.0,357.7 673.0,356.4 674.0,354.7 675.0,353.9 676.0,349.8 677.0,345.4 678.0,341.1 679.0,337.1 680.0,336.4 681.0,336.2 682.0,335.7 683.0,335.1 684.0,335.3 685.0,334.9 686.0,334.3 687.0,335.1 688.0,334.6 689.0,335.0 690.0,335.1 691.0,333.9 692.0,333.9 693.0,334.0 694.0,333.1 695.0,332.7 696.0,333.8 697.0,334.4 698.0,334.9 699.0,335.7 700.0,337.4 701.0,339.9 702.0,344.3 703.0,350.1 704.0,356.1 705.0,361.6 706.0,363.7 707.0,365.2 708.0,366.1 709.0,365.4 710.0,364.8 711.0,363.6 712.0,363.6 713.0,363.4 714.0,363.5 715.0,362.9" stroke="#FFFFFF" stroke-width="1"/>
<polyline points="35.0,441.0 38.0,438.0 40.0,435.0 42.0,440.0 43.0,445.0 45.0,433.0 45.5,427.0 46.0,440.0 47.0,448.0 50.0,446.0 52.0,443.0 54.0,445.0 56.0,440.0 58.0,443.0 60.0,437.0 62.0,441.0 64.0,432.0 66.0,428.0 67.0,436.0 69.0,427.0 71.0,435.0 74.0,440.0 77.0,444.0 79.0,441.0 81.0,447.0 83.0,443.0 85.0,446.0 86.0,440.0 88.0,447.0 90.0,432.0 91.0,428.0 94.0,420.0 96.0,421.0 98.0,426.0 101.0,426.0 103.0,422.0 105.0,414.0 106.5,411.0 108.0,418.0 110.0,425.0 113.0,433.0 115.0,428.0 117.0,422.0 119.0,421.0 121.0,427.0 122.0,434.0 125.0,430.0 126.0,440.0 128.0,442.0 130.0,441.0 131.0,446.0 133.0,440.0 135.0,443.0 136.0,430.0 137.0,415.0 138.0,420.0 138.5,440.0 140.0,450.0 142.0,454.0 145.0,454.0 148.0,452.0 150.0,451.0 152.0,448.0 153.0,440.0 153.5,432.0 154.0,440.0 155.0,445.0 157.0,450.0 159.0,458.0 160.0,462.0 162.0,459.0 164.0,460.0 166.0,452.0 168.0,456.0 170.0,450.0 172.0,454.0 174.0,448.0 176.0,449.0 178.0,452.0 179.0,449.0 180.0,458.0 181.0,465.0 183.0,470.0 184.0,462.0 186.0,459.0 188.0,463.0 190.0,456.0 192.0,452.0 194.0,449.0 196.0,448.0 197.0,460.0 199.0,454.0 200.0,460.0 201.0,450.0 202.0,440.0 204.0,444.0 205.0,440.0 207.0,448.0 210.0,446.0 213.0,443.0 215.0,446.0 217.0,452.0 220.0,455.0 222.0,456.0 224.0,447.0 226.0,449.0 228.0,446.0 230.0,448.0 232.0,444.0 235.0,442.0 237.0,445.0 239.0,438.0 241.0,433.0 243.0,435.0 243.5,430.0 245.0,440.0 246.0,442.0 247.0,438.0 248.0,448.0 249.0,455.0 250.0,463.0 250.5,475.0 252.0,470.0 253.0,466.0 255.0,468.0 257.0,462.0 259.0,460.0 262.0,456.0 264.0,455.0 266.0,450.0 268.0,440.0 270.0,437.0 272.0,432.0 273.0,443.0 275.0,448.0 277.0,444.0 279.0,445.0 282.0,440.0 284.0,438.0 285.0,443.0 286.0,436.0 288.0,440.0 289.0,451.0 291.0,447.0 293.0,452.0 294.0,444.0 296.0,450.0 297.0,457.0 299.0,450.0 300.0,445.0 302.0,448.0 304.0,450.0 307.0,451.0 309.0,443.0 311.0,438.0 312.0,433.0 314.0,426.0 315.0,440.0 317.0,433.0 317.5,453.0 319.0,440.0 322.0,432.0 324.0,437.0 326.0,434.0 328.0,440.0 329.0,437.0 331.0,440.0 333.0,435.0 335.0,438.0 338.0,434.0 340.0,420.0 341.0,414.0 342.0,410.0 344.0,418.0 346.0,418.0 348.0,415.0 351.0,415.0 353.0,418.0 355.0,419.0 357.0,427.0 358.0,433.0 361.0,435.0 363.0,437.0 363.5,460.0 364.0,468.0 366.0,462.0 367.0,458.0 370.0,453.0 372.0,453.0 374.0,455.0 376.0,444.0 378.0,440.0 380.0,434.0 383.0,427.0 385.0,415.0 386.0,412.0 387.0,418.0 387.5,435.0 389.0,440.0 391.0,444.0 393.0,446.0 396.0,446.0 399.0,444.0 401.0,441.0 403.0,446.0 404.0,440.0 405.0,455.0 406.0,465.0 407.0,458.0 408.0,467.0 409.0,458.0 411.0,456.0 413.0,459.0 415.0,458.0 417.0,462.0 419.0,458.0 421.0,450.0 424.0,446.0 426.0,430.0 428.0,420.0 429.0,410.0 430.0,404.0 431.0,420.0 432.0,430.0 434.0,433.0 435.0,434.0 437.0,435.0 439.0,435.0 441.0,431.0 443.0,429.0 445.0,433.0 446.0,427.0 447.0,434.0 449.0,436.0 450.0,440.0 451.0,436.0 452.0,442.0 453.0,436.0 454.0,431.0 455.0,445.0 456.0,455.0 458.0,451.0 460.0,453.0 462.0,451.0 464.0,446.0 466.0,443.0 468.0,446.0 469.0,443.0 471.0,448.0 473.0,460.0 474.0,465.0 475.0,457.0 477.0,461.0 479.0,458.0 480.0,464.0 481.0,462.0 482.0,467.0 484.0,458.0 486.0,454.0 488.0,453.0 490.0,451.0 491.0,443.0 492.0,455.0 493.0,448.0 495.0,460.0 496.0,448.0 498.0,455.0 500.0,460.0 502.0,452.0 503.0,449.0 504.0,455.0 506.0,451.0 508.0,450.0 511.0,447.0 513.0,451.0 515.0,450.0 517.0,453.0 519.0,455.0 521.0,460.0 522.0,465.0 524.0,458.0 525.0,448.0 528.0,445.0 531.0,443.0 532.0,442.0 534.0,447.0 536.0,441.0 537.0,447.0 539.0,446.0 540.0,449.0 542.0,460.0 542.5,468.0 543.0,455.0 545.0,457.0 547.0,452.0 549.0,455.0 551.0,449.0 553.0,451.0 555.0,448.0 557.0,446.0 559.0,440.0 560.5,436.0 562.0,441.0 564.0,445.0 565.0,440.0 566.0,450.0 568.0,455.0 570.0,452.0 572.0,456.0 574.0,453.0 576.0,455.0 578.0,451.0 580.0,444.0 581.0,448.0 583.0,443.0 584.0,452.0 586.0,445.0 587.0,452.0 589.0,440.0 590.5,431.0 592.0,445.0 594.0,449.0 596.0,444.0 598.0,447.0 600.0,443.0 602.0,443.0 604.0,448.0 605.0,452.0 607.0,455.0 609.0,460.0 610.0,452.0 612.0,440.0 613.0,438.0 615.0,445.0 617.0,444.0 619.0,450.0 621.0,447.0 623.0,452.0 625.0,443.0 627.0,437.0 629.0,432.0 630.5,427.0 632.0,440.0 634.0,455.0 635.0,462.0 636.0,469.0 638.0,462.0 640.0,459.0 642.0,462.0 643.0,458.0 645.0,461.0 647.0,455.0 649.0,445.0 651.0,443.0 653.0,441.0 655.0,448.0 657.0,445.0 659.0,452.0 661.0,454.0 662.0,447.0 664.0,440.0 666.0,446.0 668.0,441.0 670.0,438.0 672.0,436.0 674.0,430.0 675.0,440.0 677.0,432.0 678.0,428.0 679.0,420.0 680.0,413.0 681.0,410.0 682.0,425.0 684.0,428.0 686.0,427.0 688.0,430.0 690.0,431.0 692.0,428.0 694.0,426.0 697.0,430.0 699.0,448.0 701.0,462.0 703.0,469.0 705.0,464.0 707.0,466.0 709.0,462.0 710.0,462.0" stroke="#FFCC00" stroke-width="1"/>
<path d="M522 469.5H557V470.5H624V471.5H690V472.5H724" stroke="#F01010" stroke-width="1"/>
<ellipse cx="638.5" cy="363" rx="14" ry="18" stroke="#10E010" stroke-width="1"/>
<ellipse cx="704" cy="363.5" rx="11" ry="15.3" stroke="#10E010" stroke-width="1"/>
<ellipse cx="637" cy="448.5" rx="13.5" ry="25" stroke="#10E010" stroke-width="1"/>
<ellipse cx="700" cy="451.5" rx="11.8" ry="27" stroke="#10E010" stroke-width="1"/>
</g>
<rect x="715" y="472" width="9" height="1" fill="#F01010"/>
<rect x="40" y="182" width="7" height="7" fill="#30E030"/>
<text x="50.4" y="188.6" font-size="9.6" fill="#58DAFF" textLength="110.7" lengthAdjust="spacing">USD/CAD(1 hr. 30 day)</text>
<rect x="170" y="182" width="7" height="7" fill="#F0C400"/>
<text x="180.4" y="188.6" font-size="9.6" fill="#58DAFF" textLength="94.4" lengthAdjust="spacing">BLG_UP(20,2,SMA)</text>
<rect x="284" y="182" width="7" height="7" fill="#F0C400"/>
<text x="294.7" y="188.6" font-size="9.6" fill="#58DAFF" textLength="95.10000000000001" lengthAdjust="spacing">BLG_LW(20,2,SMA)</text>
<rect x="398.5" y="182" width="7" height="7" fill="#F4F4F4"/>
<text x="409.09999999999997" y="188.6" font-size="9.6" fill="#58DAFF" textLength="35.7" lengthAdjust="spacing">SMA(5)</text>
<rect x="454" y="182" width="7" height="7" fill="#E040E8"/>
<text x="463.9" y="188.6" font-size="9.6" fill="#58DAFF" textLength="42.2" lengthAdjust="spacing">SMA(21)</text>
<rect x="515" y="182" width="7" height="7" fill="#40C0E8"/>
<text x="524.8" y="188.6" font-size="9.6" fill="#58DAFF" textLength="42.2" lengthAdjust="spacing">SMA(55)</text>
<rect x="40" y="390" width="7" height="7" fill="#F0C400"/>
<text x="49.9" y="397" font-size="9.6" fill="#58DAFF" textLength="35.800000000000004" lengthAdjust="spacing">RSI(14)</text>
<rect x="95" y="390" width="7" height="7" fill="#F4F4F4"/>
<text x="105.10000000000001" y="397" font-size="9.6" fill="#58DAFF" textLength="49.5" lengthAdjust="spacing">OVRSOLD</text>
<rect x="165" y="390" width="7" height="7" fill="#F4F4F4"/>
<text x="174.8" y="397" font-size="9.6" fill="#58DAFF" textLength="50.800000000000004" lengthAdjust="spacing">OVRBGHT</text>
<g transform="translate(724.9,213.6) scale(1,0.9)"><text x="0" y="0" font-size="10.5" fill="#111" text-anchor="start" textLength="32.6" lengthAdjust="spacing">1.3200</text></g>
<g transform="translate(724.9,240.1) scale(1,0.9)"><text x="0" y="0" font-size="10.5" fill="#111" text-anchor="start" textLength="32.6" lengthAdjust="spacing">1.3100</text></g>
<g transform="translate(724.9,266.6) scale(1,0.9)"><text x="0" y="0" font-size="10.5" fill="#111" text-anchor="start" textLength="32.6" lengthAdjust="spacing">1.3000</text></g>
<g transform="translate(724.9,293.1) scale(1,0.9)"><text x="0" y="0" font-size="10.5" fill="#111" text-anchor="start" textLength="32.6" lengthAdjust="spacing">1.2900</text></g>
<g transform="translate(724.9,319.6) scale(1,0.9)"><text x="0" y="0" font-size="10.5" fill="#111" text-anchor="start" textLength="32.6" lengthAdjust="spacing">1.2800</text></g>
<g transform="translate(724.9,345.6) scale(1,0.9)"><text x="0" y="0" font-size="10.5" fill="#111" text-anchor="start" textLength="32.6" lengthAdjust="spacing">1.2700</text></g>
<g transform="translate(724.9,371.6) scale(1,0.9)"><text x="0" y="0" font-size="10.5" fill="#111" text-anchor="start" textLength="32.6" lengthAdjust="spacing">1.2600</text></g>
<g transform="translate(724.4,411.6) scale(1,0.9)"><text x="0" y="0" font-size="10.5" fill="#111" text-anchor="start" textLength="27.2" lengthAdjust="spacing">80.00</text></g>
<g transform="translate(724.4,439.6) scale(1,0.9)"><text x="0" y="0" font-size="10.5" fill="#111" text-anchor="start" textLength="27.2" lengthAdjust="spacing">55.00</text></g>
<g transform="translate(724.4,466.6) scale(1,0.9)"><text x="0" y="0" font-size="10.5" fill="#111" text-anchor="start" textLength="27.2" lengthAdjust="spacing">30.00</text></g>
<g transform="translate(723.6,493.6) scale(1,0.9)"><text x="0" y="0" font-size="10.5" fill="#111" text-anchor="start" textLength="34" lengthAdjust="spacing">5.0000</text></g>
<rect x="715" y="357" width="50" height="12" fill="#0A7A60"/>
<g transform="translate(724.9,366.3) scale(1,0.9)"><text x="0" y="0" font-size="10.5" fill="#FFF" text-anchor="start" textLength="32.6" lengthAdjust="spacing">1.2619</text></g>
<rect x="715" y="453" width="50" height="12" fill="#0A7A60"/>
<g transform="translate(724.4,462.6) scale(1,0.9)"><text x="0" y="0" font-size="10.5" fill="#FFF" text-anchor="start" textLength="26.6" lengthAdjust="spacing">33.37</text></g>
<g transform="translate(65,509.6) scale(1,0.86)"><text x="0" y="0" font-size="10.5" fill="#111" text-anchor="middle">07:00</text></g>
<g transform="translate(105,509.6) scale(1,0.86)"><text x="0" y="0" font-size="10.5" fill="#111" text-anchor="middle">00:00</text></g>
<g transform="translate(145,509.6) scale(1,0.86)"><text x="0" y="0" font-size="10.5" fill="#111" text-anchor="middle">19:00</text></g>
<g transform="translate(185,509.6) scale(1,0.86)"><text x="0" y="0" font-size="10.5" fill="#111" text-anchor="middle">15:00</text></g>
<g transform="translate(225,509.6) scale(1,0.86)"><text x="0" y="0" font-size="10.5" fill="#111" text-anchor="middle">07:00</text></g>
<g transform="translate(265,509.6) scale(1,0.86)"><text x="0" y="0" font-size="10.5" fill="#111" text-anchor="middle">03:00</text></g>
<g transform="translate(305,509.6) scale(1,0.86)"><text x="0" y="0" font-size="10.5" fill="#111" text-anchor="middle">22:00</text></g>
<g transform="translate(345,509.6) scale(1,0.86)"><text x="0" y="0" font-size="10.5" fill="#111" text-anchor="middle">15:00</text></g>
<g transform="translate(385,509.6) scale(1,0.86)"><text x="0" y="0" font-size="10.5" fill="#111" text-anchor="middle">10:00</text></g>
<g transform="translate(425,509.6) scale(1,0.86)"><text x="0" y="0" font-size="10.5" fill="#111" text-anchor="middle">06:00</text></g>
<g transform="translate(465,509.6) scale(1,0.86)"><text x="0" y="0" font-size="10.5" fill="#111" text-anchor="middle">22:00</text></g>
<g transform="translate(505,509.6) scale(1,0.86)"><text x="0" y="0" font-size="10.5" fill="#111" text-anchor="middle">18:00</text></g>
<g transform="translate(545,509.6) scale(1,0.86)"><text x="0" y="0" font-size="10.5" fill="#111" text-anchor="middle">13:00</text></g>
<g transform="translate(585,509.6) scale(1,0.86)"><text x="0" y="0" font-size="10.5" fill="#111" text-anchor="middle">06:00</text></g>
<g transform="translate(625,509.6) scale(1,0.86)"><text x="0" y="0" font-size="10.5" fill="#111" text-anchor="middle">02:00</text></g>
<g transform="translate(665,509.6) scale(1,0.86)"><text x="0" y="0" font-size="10.5" fill="#111" text-anchor="middle">18:00</text></g>
<g transform="translate(705,509.6) scale(1,0.86)"><text x="0" y="0" font-size="10.5" fill="#111" text-anchor="middle">14:00</text></g>
<g transform="translate(80.5,518.7) scale(1,0.86)"><text x="0" y="0" font-size="10.5" fill="#111" text-anchor="middle">08/27</text></g>
<g transform="translate(193.5,518.7) scale(1,0.86)"><text x="0" y="0" font-size="10.5" fill="#111" text-anchor="middle">09/03</text></g>
<g transform="translate(307,518.7) scale(1,0.86)"><text x="0" y="0" font-size="10.5" fill="#111" text-anchor="middle">09/10</text></g>
<g transform="translate(420.5,518.7) scale(1,0.86)"><text x="0" y="0" font-size="10.5" fill="#111" text-anchor="middle">09/17</text></g>
<g transform="translate(533.5,518.7) scale(1,0.86)"><text x="0" y="0" font-size="10.5" fill="#111" text-anchor="middle">09/24</text></g>
<g transform="translate(646.5,518.7) scale(1,0.86)"><text x="0" y="0" font-size="10.5" fill="#111" text-anchor="middle">10/01</text></g>
<rect x="6" y="521" width="769" height="17" fill="#F6F3EE"/>
<rect x="6.5" y="522.5" width="14" height="14" rx="2" fill="#C4D2F8" stroke="#E8EEFC" stroke-width="1" shape-rendering="geometricPrecision"/>
<path d="M15.5 526L12 529.5L15.5 533" fill="none" stroke="#4D6185" stroke-width="2" shape-rendering="geometricPrecision"/>
<rect x="24.5" y="523" width="721" height="13" rx="2" fill="#C6D3F8" stroke="#B8C8F0" stroke-width="1" shape-rendering="geometricPrecision"/>
<path d="M382.5 526V533M384.5 526V533M386.5 526V533M388.5 526V533" stroke="#F4F6FF" stroke-width="1"/>
<rect x="758.5" y="522.5" width="15" height="14" rx="2" fill="#C4D2F8" stroke="#E8EEFC" stroke-width="1" shape-rendering="geometricPrecision"/>
<path d="M764 526L767.5 529.5L764 533" fill="none" stroke="#4D6185" stroke-width="2" shape-rendering="geometricPrecision"/>
<rect x="4" y="537" width="790" height="2" fill="#FFFFFF"/><rect x="4" y="539" width="790" height="2" fill="#B0ACA8"/>
<rect x="4" y="541" width="790" height="21" fill="#ECE9DE"/>
<rect x="567" y="543" width="1" height="17" fill="#C8C4BA"/><rect x="568" y="543" width="1" height="17" fill="#FFFFFF"/>
<rect x="591" y="543" width="1" height="17" fill="#C8C4BA"/><rect x="592" y="543" width="1" height="17" fill="#FFFFFF"/>
<rect x="615" y="543" width="1" height="17" fill="#C8C4BA"/><rect x="616" y="543" width="1" height="17" fill="#FFFFFF"/>
<rect x="639" y="543" width="1" height="17" fill="#C8C4BA"/><rect x="640" y="543" width="1" height="17" fill="#FFFFFF"/>
<path d="M9.5 544.5H19L21.5 547V558.5H9.5Z" fill="#E4EAF8" stroke="#5A68A8" stroke-width="1" shape-rendering="geometricPrecision"/>
<ellipse cx="11.8" cy="552.2" rx="4.6" ry="4" fill="none" stroke="#1C6CDC" stroke-width="2.2" shape-rendering="geometricPrecision"/><path d="M7.5 552H16.5" stroke="#1C6CDC" stroke-width="1.6"/><path d="M14 549Q18 546 19 548" fill="none" stroke="#2A9AE0" stroke-width="1.2" shape-rendering="geometricPrecision"/>
<text x="26" y="556" font-size="11" fill="#000">Applet stockWatch started</text>
<circle cx="651.7" cy="552.6" r="6.3" fill="#0A14D8" shape-rendering="geometricPrecision"/><path d="M658 552.6A6.3 6.3 0 0 1 651.7 558.9L653 558Q656 556 658 552.6Z" fill="#000040" shape-rendering="geometricPrecision"/>
<path d="M647 548.5Q650 546.5 653 547.5L652 549.5Q649 550.5 648 550Z M653.5 550.5L657 549.5Q658.5 552 657 555.5L654 555Q653 552 653.5 550.5Z M646 553Q648 552.5 649.5 554L649.5 557Q647 556 646 553Z" fill="#10D010" shape-rendering="geometricPrecision"/>
<text x="663.5" y="556.5" font-size="11.5" fill="#000">Internet</text>
<rect x="790" y="552" width="2" height="2" fill="#C0BCB0"/>
<rect x="787" y="555" width="2" height="2" fill="#C0BCB0"/>
<rect x="790" y="555" width="2" height="2" fill="#C0BCB0"/>
<rect x="784" y="558" width="2" height="2" fill="#C0BCB0"/>
<rect x="787" y="558" width="2" height="2" fill="#C0BCB0"/>
<rect x="790" y="558" width="2" height="2" fill="#C0BCB0"/>
</svg></body></html>
